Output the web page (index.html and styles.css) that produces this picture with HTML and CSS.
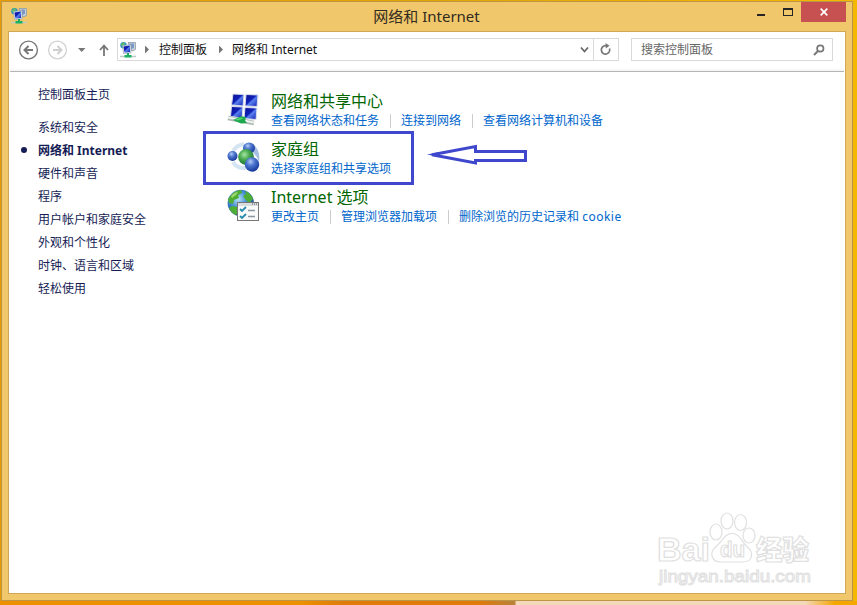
FILE: index.html
```html
<!DOCTYPE html>
<html lang="zh-CN">
<head>
<meta charset="utf-8">
<title>网络和 Internet</title>
<link rel="stylesheet" href="styles.css">
</head>
<body>
<svg class="defs" width="0" height="0" aria-hidden="true">
  <defs>
    <linearGradient id="screen" x1="0" y1="0" x2="1" y2="1"><stop offset="0" stop-color="#0c1490"/><stop offset=".45" stop-color="#1020b8"/><stop offset=".55" stop-color="#5a80ee"/><stop offset="1" stop-color="#0c1cb0"/></linearGradient>
    <radialGradient id="blue" cx=".4" cy=".3" r=".7"><stop offset="0" stop-color="#b4cdf5"/><stop offset=".4" stop-color="#4f78cf"/><stop offset="1" stop-color="#15389b"/></radialGradient>
    <radialGradient id="green" cx=".4" cy=".35" r=".7"><stop offset="0" stop-color="#a5e6a0"/><stop offset=".45" stop-color="#47a851"/><stop offset="1" stop-color="#12702a"/></radialGradient>
    <radialGradient id="sea" cx=".4" cy=".35" r=".7"><stop offset="0" stop-color="#b8e4fa"/><stop offset=".5" stop-color="#3c86cf"/><stop offset="1" stop-color="#164282"/></radialGradient>
    <symbol id="net" viewBox="0 0 16 16">
      <path d="M8 .5h7.500V7.500L12 9z" fill="#c9d3dc" stroke="#8e9ba8" stroke-width=".8"/>
      <path d="M9.500 1.500H14v4.500l-3 1z" fill="#7f98c4"/>
      <circle cx="3.500" cy="3.200" r="3.200" fill="#2b91c4"/>
      <path d="M1 2.500 3 .5l2 .5-1 2-2 1.500z" fill="#65c455"/>
      <path d="M2.500 3.500l8.500-1v8.500l-7.500.5z" fill="#dfe7ef" stroke="#8c9aaa" stroke-width=".6"/>
      <path d="M3.500 4.500l6.500-.9v6.400l-5.500.5z" fill="url(#screen)"/>
      <path d="M7 11h2v2H7z" fill="#1da65c"/>
      <path d="M0 14.500h16" stroke="#c2cac6" stroke-width="1.500"/>
      <path d="M4.500 13h7v2.500h-7z" fill="#18b363"/>
    </symbol>
  </defs>
</svg>
<div class="window">
  <header class="titlebar">
    <svg class="app-icon" width="16" height="16"><use href="#net"/></svg>
    <h1>网络和 Internet</h1>
    <div class="controls">
      <span class="minimize"></span>
      <span class="maximize"></span>
      <span class="close"><svg width="8" height="8" viewBox="0 0 8 8"><path d="M.7.7l6.600 6.600M7.300.7.7 7.300" stroke="#fff" stroke-width="1.700"/></svg></span>
    </div>
  </header>
  <div class="client">
    <nav class="toolbar">
      <svg class="nav-buttons" width="96" height="22" viewBox="0 0 96 22" fill="none">
        <circle cx="10.500" cy="11" r="8.900" stroke="#777" stroke-width="1.400"/>
        <path d="M15 11H7m3.500-4L6.500 11l4 4" stroke="#777" stroke-width="2"/>
        <circle cx="39.500" cy="11" r="8.900" stroke="#d2d2d2" stroke-width="1.300"/>
        <path d="M35 11h8m-3.500-4 4 4-4 4" stroke="#cfcfcf" stroke-width="2"/>
        <path d="M60 9h7.500L63.700 13z" fill="#777"/>
        <path d="M86 17V7m-4 4 4-4.400 4 4.400" stroke="#777" stroke-width="1.800"/>
      </svg>
      <div class="address">
        <svg class="place-icon" width="16" height="16"><use href="#net"/></svg>
        <i class="chevron"></i><span class="crumb">控制面板</span>
        <i class="chevron"></i><span class="crumb">网络和 Internet</span>
        <svg class="drop" width="9" height="8" viewBox="0 0 9 8"><path d="M1 1.500 4.500 5.500 8 1.500" fill="none" stroke="#666" stroke-width="1.800"/></svg>
        <span class="refresh"><svg width="12" height="13" viewBox="0 0 12 13"><path d="M7.500 2.700H5.500A4.200 4.200 0 1 0 9.500 5.500" fill="none" stroke="#777" stroke-width="1.700"/><path d="M5.500 0 9.500 2.800 5.800 5.600z" fill="#777"/></svg></span>
      </div>
      <div class="search"><span>搜索控制面板</span>
        <svg width="12" height="12" viewBox="0 0 12 12" fill="none" stroke="#777"><circle cx="7.300" cy="4.500" r="3.200" stroke-width="1.700"/><path d="M5 7 1 11" stroke-width="2"/></svg>
      </div>
    </nav>
    <main class="content">
      <aside class="sidebar">
        <a class="home">控制面板主页</a>
        <ul>
          <li>系统和安全</li>
          <li class="current">网络和 Internet</li>
          <li>硬件和声音</li>
          <li>程序</li>
          <li>用户帐户和家庭安全</li>
          <li>外观和个性化</li>
          <li>时钟、语言和区域</li>
          <li>轻松使用</li>
        </ul>
      </aside>
      <div class="categories">
        <section class="category">
          <svg width="33" height="34" viewBox="0 0 33 34">
            <g fill="url(#screen)" stroke="#d8deeb"><path d="M6 1l11 .5-1 11.500-11.500-1z"/><path d="M19 1.500l12 .5L30 13.500l-12-.5z"/><path d="M4.500 13.500l11.500.5-1 11-11.500-1.500z"/><path d="M18 14.500 30 15l-1 11.500-12-1z"/></g>
            <path d="M1 25 27 30" stroke="#aebbb4" stroke-width="4.500"/><path d="M1 24.500 27 29.500" stroke="#edf1ee" stroke-width="2"/>
            <path d="M6 27l8-3.700 5 .7-1 3.500 2 2.500-6 .4z" fill="#1ca84c"/><path d="M8 26.500l6-2 2 1-5 2z" fill="#55d978"/>
          </svg>
          <div class="copy"><h2>网络和共享中心</h2><div class="links"><a>查看网络状态和任务</a><a>连接到网络</a><a>查看网络计算机和设备</a></div></div>
        </section>
        <section class="category">
          <svg width="33" height="34" viewBox="0 0 33 34">
            <path d="M6 10Q10 4 17 3M6 21q4 7 13 6" fill="none" stroke="#d5e4f3" stroke-width="4"/>
            <path d="M24 2q10 5 8 19-3-9-9-11z" fill="#a5bfe3"/><ellipse cx="22" cy="7" rx="6" ry="5.500" fill="url(#blue)"/>
            <circle cx="5.500" cy="15" r="5" fill="url(#blue)"/><circle cx="19" cy="16" r="7.900" fill="url(#green)"/><circle cx="25" cy="23.500" r="7.200" fill="url(#blue)"/>
          </svg>
          <div class="copy"><h2>家庭组</h2><div class="links"><a>选择家庭组和共享选项</a></div></div>
        </section>
        <section class="category">
          <svg width="33" height="34" viewBox="0 0 33 34">
            <circle cx="13.800" cy="14" r="13.200" fill="url(#sea)"/>
            <path d="M4 6q5-5 10-5l1 3-4 2 1 3-5 2-1 4-4-1-1-4zM18 2q6 2 8 8l-4 4-4-4-2-3 3-2zM5 17l6 1 2 3-4 5q-5-2-7-7z" fill="#4ead35"/>
            <path d="M4 7q4-4 7-4l-2 3-4 3z" fill="#9fd86c"/>
            <rect x="10.500" y="13.500" width="21" height="18" fill="#fafafa" stroke="#777"/><path d="M11 15.500h20" stroke="#d9dde0" stroke-width="3"/><path d="M25 15h1m1 0h1m1 0h1" stroke="#555"/>
            <path d="m13 20 2 2 4-4m-6 9 2 2 4-4" fill="none" stroke="#278cab" stroke-width="1.800"/><path d="M21 21.500h7m-7 6h7" stroke="#8b98a4" stroke-width="1.300"/>
          </svg>
          <div class="copy"><h2>Internet 选项</h2><div class="links"><a>更改主页</a><a>管理浏览器加载项</a><a>删除浏览的历史记录和 <span class="latin">cookie</span></a></div></div>
        </section>
      </div>
    </main>
  </div>
</div>
<div class="highlight"></div>
<svg class="arrow" width="102" height="22" viewBox="0 0 102 22"><path d="M5 10.700 48.500 2.500V7.500H98.500v9H48.500V19z" fill="#fff" stroke="#3f48cc" stroke-width="3"/><path d="M0 10.500 13 8v5z" fill="#3f48cc"/></svg>
<svg class="watermark" width="170" height="85" viewBox="0 0 170 85">
  <g class="halo">
    <text x="3" y="51" class="brand" textLength="53" lengthAdjust="spacingAndGlyphs">Bai</text>
    <ellipse cx="62" cy="22" rx="6" ry="8"/><ellipse cx="73" cy="11" rx="6" ry="8"/><ellipse cx="86.500" cy="12.500" rx="6" ry="8"/><ellipse cx="95" cy="25.500" rx="6" ry="7.500"/>
    <path d="M78 23.500c8 0 9 8 15 13 7 6 6 15.500-4 15.500H67c-10 0-12-9.500-5-15.500 7-5 8-13 16-13z"/>
    <text x="66" y="47" class="du" textLength="25" lengthAdjust="spacingAndGlyphs">du</text>
    <text x="102" y="50" class="experience" textLength="53" lengthAdjust="spacingAndGlyphs">经验</text>
    <text x="5" y="71.500" class="domain" textLength="152" lengthAdjust="spacingAndGlyphs">jingyan.baidu.com</text>
  </g>
</svg>
</body>
</html>
```
FILE: styles.css
```css
* { box-sizing: border-box; }
body {
  margin: 0;
  width: 857px;
  height: 605px;
  padding: 1px 4px 4px 1px;
  overflow: hidden;
  position: relative;
  font: 12px/16px "Noto Sans", "Noto Sans CJK SC", sans-serif;
  background:
    linear-gradient(90deg, #ed9000 0 300px, #df7a0b 345px 480px, #b8833c 515px, #f3d9b9 516px 805px, #f5a600 835px) 0 601px / 100% 4px no-repeat,
    linear-gradient(90deg, #e59b00, #e3a600 50%, #f5b800);
}
.defs { position: absolute; }
.window {
  width: 852px;
  height: 600px;
  padding: 0 6px 6px;
  border: 1px solid #bc9548;
  background: #f0c76a;
  display: flex;
  flex-direction: column;
}
.titlebar { height: 29px; flex: none; display: flex; align-items: flex-start; }
.app-icon { margin: 6px 0 0 3px; }
h1 { flex: 1; margin: 4px 0 0 69px; text-align: center; font-size: 15px; line-height: 20px; font-weight: 400; color: #302b21; }
.controls { display: flex; width: 89px; height: 20px; }
.minimize { width: 8px; height: 2px; margin: 12px 18px 0 0; background: #252525; }
.maximize { width: 10px; height: 8px; margin: 6px 8px 0 0; border: 1px solid #252525; border-top-width: 2px; }
.close { flex: 1; background: #c75050; display: flex; justify-content: center; align-items: center; }
.client { flex: 1; border: 1px solid #d0a757; background: #fff; }
.toolbar { height: 40px; margin: 0 1px; padding: 6px 9px 0 8px; display: flex; align-items: flex-start; border-bottom: 1px solid #b5b5b5; background: linear-gradient(#fff 36px, #f3f3f3); }
.nav-buttons { flex: none; margin: 1px 3px 0 0; }
.address { flex: none; width: 502px; height: 23px; border: 1px solid #d9d9d9; display: flex; align-items: center; }
.place-icon { margin-left: 2px; }
.chevron { width: 4px; height: 8px; margin: 0 9px; background: #777; clip-path: polygon(0 0, 100% 50%, 0 100%); }
.crumb { line-height: 19px; white-space: nowrap; color: #111; margin-left: 1px; }
.crumb + .chevron { margin: 0 8px 0 12px; }
.drop { margin-left: auto; }
.refresh { height: 21px; width: 25px; margin-left: 4px; border-left: 1px solid #d9d9d9; display: flex; align-items: center; justify-content: center; }
.search { flex: none; width: 202px; height: 23px; margin-left: 12px; padding: 0 7px 0 9px; border: 1px solid #d9d9d9; display: flex; align-items: center; justify-content: space-between; color: #666; }
.content { display: flex; }
.sidebar { width: 218px; padding: 15px 0 0 29px; color: #151c55; }
.home { display: block; }
ul { list-style: none; margin: 13px 0 0; padding: 0; }
li { height: 23px; line-height: 23px; }
.current { font-weight: 700; position: relative; }
.current::before { content: ""; position: absolute; left: -17px; top: 8px; width: 6px; height: 6px; border-radius: 50%; background: #151c55; }
.categories { padding-top: 19px; }
.category { height: 48px; display: flex; gap: 11px; }
.category > svg { flex: none; width: 33px; margin-top: 2px; }
h2 { margin: 0; font-size: 16px; line-height: 21px; font-weight: 400; color: #006600; }
.links { display: flex; white-space: nowrap; color: #0066cc; line-height: 16px; margin-top: 1px; }
.links a + a { margin-left: 11px; padding-left: 11px; background: linear-gradient(#ccc, #ccc) 0 1px / 1px 14px no-repeat; }
.latin { letter-spacing: .5px; }
.highlight { position: absolute; left: 203px; top: 131px; width: 211px; height: 54px; border: 3px solid #3f48cc; }
.arrow { position: absolute; left: 427px; top: 144px; }
.watermark { position: absolute; left: 654px; top: 510px; }
.halo { fill: #fff; stroke: #e0e0e0; stroke-width: 1.2px; }
.brand { font: 700 34px "Liberation Sans", sans-serif; }
.du { font: 700 22px "Liberation Sans", sans-serif; }
.experience { font: 900 27px "Noto Sans CJK SC", sans-serif; }
.domain { font: 400 17px "Liberation Sans", sans-serif; stroke-width: 1px; }
```
